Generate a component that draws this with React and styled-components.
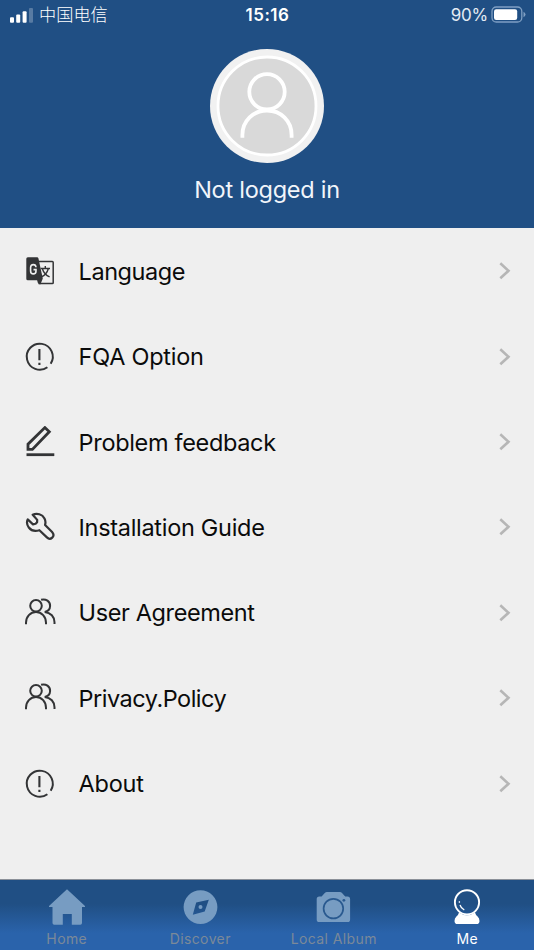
import React from "react";
import styled, { createGlobalStyle } from "styled-components";

const navy = "#204f84";
const ink = "#333436";

const LanguageIcon = () => (
  <Icon viewBox="0 0 32 32">
    <path d="M14 6.5h14.3q.9 0 .9.9v20.3q0 .9-.9.9H14.5" strokeWidth="1.5" />
    <path d="M3.8 2.2h9.3q1 0 1.3 1l4.4 20.2-2.2 5.7q-.4.6-1 .2l-1.7-1.2-.8-2.8H3.8q-1.5 0-1.5-1.5V3.7q0-1.5 1.5-1.5z" fill={ink} stroke="none" />
    <path d="M12 12.2q-.2-2.600-2.700-2.600-2.700 0-2.700 3v3.300q0 3 2.700 3t2.700-3v-1.300H9.500" stroke="#efefef" strokeWidth="1.6" />
    <path d="M16.600 13.500h9.400M21.300 11v2.500M18.400 14c1.200 3.600 3.700 6.400 7.200 7.900M24.200 14c-1 3.600-3.100 6.300-6.800 7.900" strokeWidth="1.4" />
  </Icon>
);

const NoticeIcon = () => (
  <Icon viewBox="0 0 32 32">
    <path d="M23.4 26.200a13 13 0 1 1 3.300-3.500" strokeWidth="2" />
    <path d="M15.400 8v11.200M15.400 21.800v2.300" strokeWidth="2.100" />
  </Icon>
);

const PencilIcon = () => (
  <Icon viewBox="0 0 32 32">
    <path d="M4 23.400v-5.200L20.900 1.600l4.400 4.200L8.400 23.400z" strokeWidth="2.8" />
    <path d="M2.500 28.700h27.800" strokeWidth="2.8" />
  </Icon>
);

const WrenchIcon = () => (
  <Icon viewBox="0 0 32 32">
    <path
      d="M8.700 3.700c4.200-1.900 9.600-.6 11.800 3.700 1 2 1.200 4.400.6 6.500l7 7.200c3.700 4.100-1.600 8.800-5.200 5.300l-7.500-7.200c-4.200 1.400-8.300.3-10.600-2.700-1.800-2.400-2.200-5.700-1.100-8.100l5.300 5 2.600-.6 1.500-1.600.1-2.300z"
      strokeWidth="2.2"
      strokeLinejoin="round"
    />
  </Icon>
);

const UsersIcon = () => (
  <Icon viewBox="0 0 32 32">
    <circle cx="12" cy="8.800" r="5.800" />
    <path d="M2 27.200v-1.400C2 19.700 6.300 15 12 15s10 4.700 10 10.800v1.400" />
    <path d="M17.100 2.800c4.800-1.400 9.200 1.700 9 6.200-.1 3.300-2.400 5.400-5.400 5.900 6 .7 9.800 4.900 9.800 10.400V27" />
  </Icon>
);

const menu = [
  { label: "Language", icon: LanguageIcon, spacing: -0.45 },
  { label: "FQA Option", icon: NoticeIcon, spacing: -0.25 },
  { label: "Problem feedback", icon: PencilIcon, spacing: -0.33 },
  { label: "Installation Guide", icon: WrenchIcon, spacing: -0.3 },
  { label: "User Agreement", icon: UsersIcon, spacing: -0.38 },
  { label: "Privacy.Policy", icon: UsersIcon, spacing: -0.5 },
  { label: "About", icon: NoticeIcon, spacing: -0.25 },
];

const HomeIcon = () => (
  <TabIcon viewBox="0 0 40 40">
    <path d="M20 2.200 38 19v1.100h-3V36q0 1.700-1.700 1.700h-8.500V27h-9v10.700H7.200q-1.700 0-1.700-1.700V20.100H2V19z" />
  </TabIcon>
);

const DiscoverIcon = () => (
  <TabIcon viewBox="0 0 40 40">
    <path
      fillRule="evenodd"
      d="M20.500 3.200a16.900 16.900 0 1 1 0 33.800 16.900 16.900 0 0 1 0-33.800zm8.300 9.500-12.600 2.900-3.400 12.200 11.900-3.300zM20.500 18a2 2 0 1 0 0 4 2 2 0 0 0 0-4z"
    />
  </TabIcon>
);

const CameraIcon = () => (
  <TabIcon viewBox="0 0 40 40">
    <path d="M12.800 5h13.200q1 0 1.800.8l3.400 3.700h2.300q2.600 0 2.600 2.600v20.300q0 2.600-2.600 2.600H5.300q-2.600 0-2.600-2.600V12.100q0-2.600 2.600-2.600h2.300L11 5.800q.8-.8 1.800-.8z" />
    <circle cx="19.400" cy="21.600" r="9.800" fill="none" stroke="#29598f" strokeWidth="1.700" />
    <circle cx="29.900" cy="13.300" r="1.400" fill="#29598f" />
  </TabIcon>
);

const MeIcon = () => (
  <TabIcon viewBox="0 0 40 40">
    <circle cx="20" cy="15.300" r="12.100" fill="none" stroke="currentColor" strokeWidth="1.900" />
    <path d="M12 25.400q8 5.600 16 0 .6 2.400 2.600 4.200 1.900 1.700 1.900 4.300 0 3.100-3 3.100h-19q-3 0-3-3.100 0-2.600 1.900-4.300 2-1.800 2.600-4.200z" />
    <path d="M12.400 14.200v1.500M13 18q1 3.300 4.300 5" fill="none" stroke="currentColor" strokeWidth="1.300" />
  </TabIcon>
);

const tabs = [
  { label: "Home", icon: HomeIcon },
  { label: "Discover", icon: DiscoverIcon },
  { label: "Local Album", icon: CameraIcon },
  { label: "Me", icon: MeIcon, active: true },
];

const App = () => {
  return (
    <Root>
      <GlobalStyle />
      <Header>
        <StatusBar>
          <Carrier>
            <Signal viewBox="0 0 24 15">
              <rect x="0" y="9.300" width="4" height="5.400" rx="1" />
              <rect x="6.200" y="6.500" width="4" height="8.200" rx="1" />
              <rect x="12.600" y="3.200" width="4" height="11.500" rx="1" />
              <rect x="19" y="0" width="4" height="14.700" rx="1" opacity=".25" />
            </Signal>
            中国电信
          </Carrier>
          <Time>15:16</Time>
          <Power>
            90%
            <Battery viewBox="0 0 36 18">
              <rect x="1" y="1" width="29.800" height="15" rx="4.300" fill="none" stroke="#7f9fc3" strokeWidth="1.300" />
              <rect x="3" y="3.200" width="23.200" height="10.700" rx="2.200" fill="#fff" />
              <path d="M32.500 5.800q2 1 2 2.700t-2 2.700z" fill="#7f9fc3" />
            </Battery>
          </Power>
        </StatusBar>
        <Avatar viewBox="0 0 114 114">
          <circle cx="57" cy="57" r="57" fill="#f1f1f1" />
          <circle cx="57" cy="57" r="49" fill="#d9d9d9" stroke="#fff" strokeWidth="2.800" />
          <g fill="none" stroke="#fff" strokeWidth="3.800">
            <circle cx="57" cy="42.800" r="17.700" />
            <path d="M32.400 88.700V86C32.400 71.800 43.400 61.500 57 61.500S81.600 71.800 81.600 86v2.700" />
          </g>
        </Avatar>
        <UserName>Not logged in</UserName>
      </Header>
      <Menu>
        {menu.map(({ label, icon: RowIcon, spacing }) => (
          <Row key={label}>
            <RowIcon />
            <Label $spacing={spacing}>{label}</Label>
            <Chevron viewBox="0 0 12 18">
              <path d="m1.300 1.300 8.200 7.500-8.200 7.500" />
            </Chevron>
          </Row>
        ))}
      </Menu>
      <TabBar>
        {tabs.map(({ label, icon: BarIcon, active }) => (
          <Tab key={label} $active={active}>
            <BarIcon />
            <TabLabel $active={active}>{label}</TabLabel>
          </Tab>
        ))}
      </TabBar>
    </Root>
  );
};

const GlobalStyle = createGlobalStyle`
  body {
    margin: 0;
  }
`;

const Root = styled.main`
  display: flex;
  flex-direction: column;
  width: 534px;
  height: 950px;
  overflow: hidden;
  background-color: #efefef;
  font-family: Inter, "Noto Sans CJK SC", sans-serif;
`;

const Header = styled.header`
  display: flex;
  flex-direction: column;
  align-items: center;
  flex-shrink: 0;
  height: 228px;
  background-color: ${navy};
  color: #fff;
`;

const StatusBar = styled.div`
  display: grid;
  grid-template-columns: 1fr auto 1fr;
  align-items: center;
  box-sizing: border-box;
  width: 100%;
  height: 30px;
  padding: 0 7px 0 8px;
`;

const Carrier = styled.div`
  display: flex;
  align-items: center;
  gap: 5px;
  margin-left: 2px;
  font-size: 17.2px;
  font-weight: 300;
  line-height: 30px;
`;

const Signal = styled.svg`
  width: 24px;
  height: 15px;
  fill: #fff;
`;

const Time = styled.div`
  font-size: 17px;
  font-weight: 600;
  letter-spacing: 0.5px;
`;

const Power = styled.div`
  display: flex;
  align-items: center;
  justify-content: flex-end;
  gap: 3px;
  font-size: 17px;
  letter-spacing: -0.2px;
  color: #e4ebf3;
`;

const Battery = styled.svg`
  width: 36px;
  height: 18px;
`;

const Avatar = styled.svg`
  width: 114px;
  height: 114px;
  margin-top: 18.5px;
`;

const UserName = styled.div`
  margin-top: 12px;
  font-size: 23.5px;
  line-height: 30px;
  letter-spacing: -0.25px;
  color: #f1f5fa;
`;

const Menu = styled.div`
  flex: 1;
  padding-top: 0.5px;
`;

const Row = styled.div`
  display: flex;
  align-items: center;
  height: 85.4px;
  padding: 0 23px 0 24px;
`;

const Icon = styled.svg`
  width: 32px;
  height: 32px;
  flex-shrink: 0;
  fill: none;
  stroke: ${ink};
  stroke-width: 2;
`;

const Label = styled.div`
  flex: 1;
  margin-left: 22.6px;
  padding-top: 1.4px;
  font-size: 23.5px;
  line-height: 30px;
  letter-spacing: ${({ $spacing }) => $spacing}px;
  color: #0b0b0b;
`;

const Chevron = styled.svg`
  width: 12px;
  height: 18px;
  fill: none;
  stroke: #b6b6b6;
  stroke-width: 2.6;
`;

const TabBar = styled.nav`
  display: grid;
  grid-template-columns: repeat(4, 1fr);
  flex-shrink: 0;
  box-sizing: border-box;
  height: 71px;
  border-top: 1px solid #8b9098;
  background: linear-gradient(${navy} 34%, #2a63ab 76%);
`;

const Tab = styled.div`
  display: flex;
  flex-direction: column;
  align-items: center;
  padding-top: 7px;
  color: ${({ $active }) => ($active ? "#fff" : "#779cc2")};
`;

const TabIcon = styled.svg`
  width: 40px;
  height: 40px;
  fill: currentColor;
`;

const TabLabel = styled.div`
  margin-top: 3px;
  font-size: 14px;
  line-height: 17px;
  letter-spacing: 0.4px;
  color: ${({ $active }) => ($active ? "#fff" : "#7b8999")};
`;

export default App;
